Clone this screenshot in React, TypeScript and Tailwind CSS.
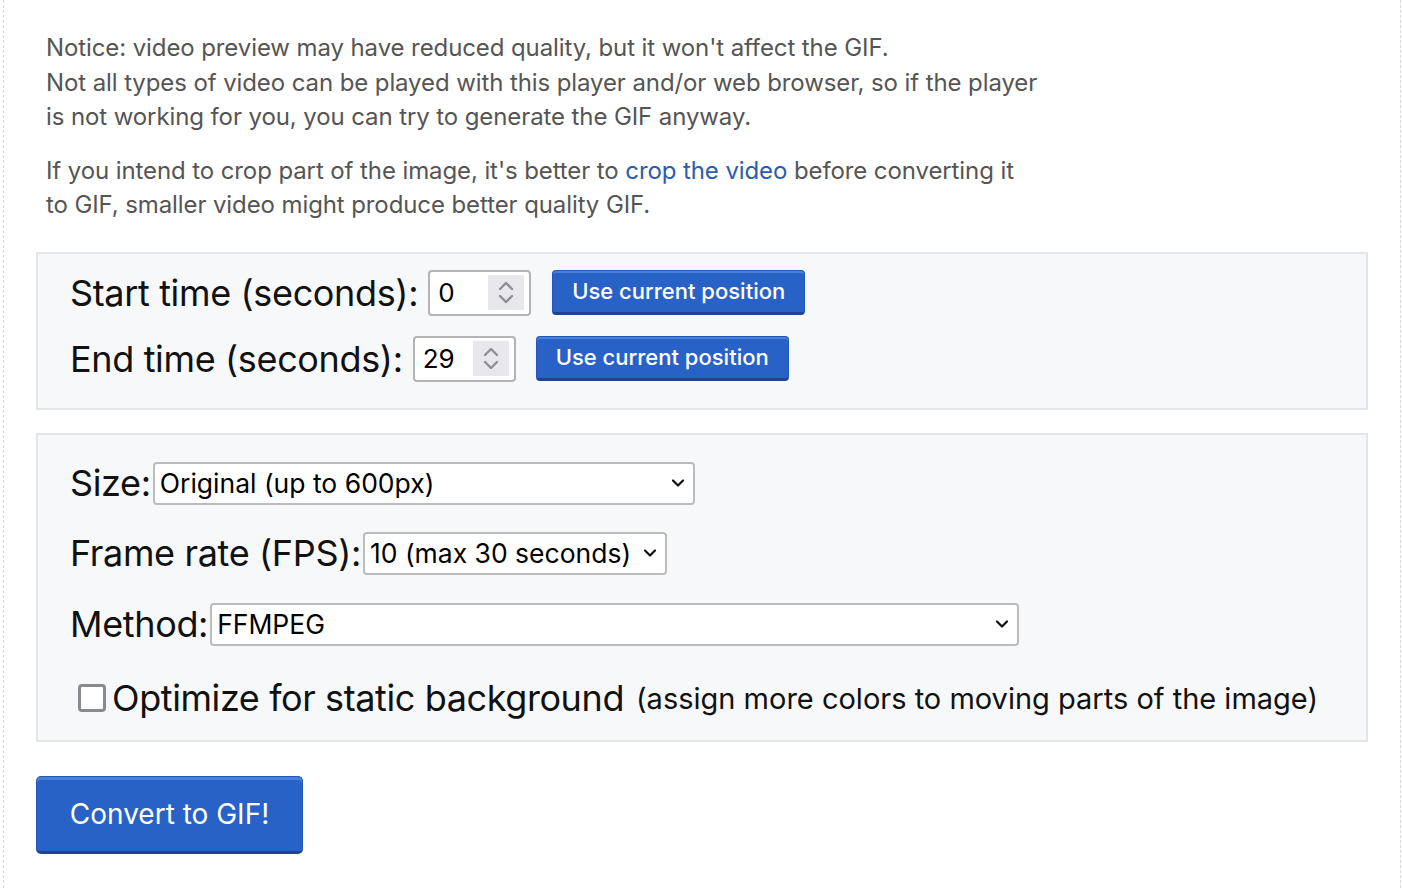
import React from "react";

const font = { fontFamily: 'Inter, "Liberation Sans", Arial, sans-serif' };

function Chevron() {
  return (
    <svg width="14" height="9" viewBox="0 0 14 9" className="pointer-events-none absolute right-[10px] top-1/2 -translate-y-1/2">
      <path d="M2 2 L7 7 L12 2" fill="none" stroke="#111" strokeWidth="2.2" strokeLinecap="round" strokeLinejoin="round" />
    </svg>
  );
}

function Spinner() {
  return (
    <div className="flex h-[35px] w-[36px] flex-col items-center justify-center gap-[3px] bg-[#e8e8ec]">
      <svg width="16" height="10" viewBox="0 0 16 10">
        <path d="M2 8 L8 2 L14 8" fill="none" stroke="#8e8e93" strokeWidth="2.4" strokeLinecap="round" strokeLinejoin="round" />
      </svg>
      <svg width="16" height="10" viewBox="0 0 16 10">
        <path d="M2 2 L8 8 L14 2" fill="none" stroke="#8e8e93" strokeWidth="2.4" strokeLinecap="round" strokeLinejoin="round" />
      </svg>
    </div>
  );
}

function NumInput({ value }: { value: string }) {
  return (
    <div className="flex h-[46px] w-[103px] items-center rounded-[4px] border-2 border-[#b4b4b4] bg-white pl-[8px] pr-[5px]">
      <input
        defaultValue={value}
        className="w-[50px] bg-transparent text-[26px] text-black outline-none"
        style={font}
      />
      <Spinner />
    </div>
  );
}

function BlueButton({ children }: { children: React.ReactNode }) {
  return (
    <button
      className="h-[45px] w-[253px] rounded-[4px] border border-[#2458b8] border-b-[3px] border-b-[#1d4592] bg-[#2962c7] text-[22px] font-medium text-white shadow-[inset_0_2px_0_#4a80d8]"
      style={font}
    >
      {children}
    </button>
  );
}

function Select({ width, value }: { width: string; value: string }) {
  return (
    <div className={`relative ${width}`}>
      <select
        defaultValue={value}
        className="h-[43px] w-full appearance-none rounded-[4px] border-2 border-[#bcbcbc] bg-white pl-[5px] text-[26.5px] text-black outline-none"
        style={font}
      >
        <option>{value}</option>
      </select>
      <Chevron />
    </div>
  );
}

export default function App() {
  return (
    <div className="min-h-[888px] bg-white" style={font}>
      <div className="ml-[3px] min-h-[888px] w-[1398px] border-x border-dashed border-x-[#d9d9d9] px-[32px] pt-[31px]">
        <div className="px-[10px] text-[24px] leading-[34.5px] tracking-[-0.1px] text-[#555]">
          <p>
            Notice: video preview may have reduced quality, but it won't affect the GIF.
            <br />
            Not all types of video can be played with this player and/or web browser, so if the player
            <br />
            is not working for you, you can try to generate the GIF anyway.
          </p>
          <p className="mt-[19px]">
            If you intend to crop part of the image, it's better to{" "}
            <a className="text-[#2a5db0]" href="#">crop the video</a> before converting it
            <br />
            to GIF, smaller video might produce better quality GIF.
          </p>
        </div>

        <div className="mt-[29px] border-2 border-[#e3e5e8] bg-[#f7f8fa] pb-[26px] pl-[32px] pt-[16px] text-[#111]">
          <div className="flex items-center">
            <span className="text-[36px] leading-[46px] tracking-[-0.35px]">Start time (seconds):</span>
            <span className="ml-[10px]"><NumInput value="0" /></span>
            <span className="ml-[21px]"><BlueButton>Use current position</BlueButton></span>
          </div>
          <div className="mt-[20px] flex items-center">
            <span className="text-[36px] leading-[46px] tracking-[-0.35px]">End time (seconds):</span>
            <span className="ml-[10px]"><NumInput value="29" /></span>
            <span className="ml-[20px]"><BlueButton>Use current position</BlueButton></span>
          </div>
        </div>

        <div className="mt-[23px] border-2 border-[#e3e5e8] bg-[#f7f8fa] pb-[20px] pl-[32px] pt-[27px] text-[#111]">
          <div className="flex items-center">
            <span className="mr-[2px] text-[36px] leading-[43px] tracking-[-0.35px]">Size:</span>
            <Select width="w-[542px]" value="Original (up to 600px)" />
          </div>
          <div className="mt-[27px] flex items-center">
            <span className="mr-[2px] text-[36px] leading-[43px] tracking-[-0.35px]">Frame rate (FPS):</span>
            <Select width="w-[304px]" value="10 (max 30 seconds)" />
          </div>
          <div className="mt-[28px] flex items-center">
            <span className="mr-[2px] text-[36px] leading-[43px] tracking-[-0.35px]">Method:</span>
            <Select width="w-[809px]" value="FFMPEG" />
          </div>
          <label className="mt-[31px] flex items-center">
            <span className="ml-[8px] mr-[6px] h-[28px] w-[28px] rounded-[4px] border-[3px] border-[#8a8a93] bg-white" />
            <span className="text-[36px] leading-[43px] tracking-[-0.4px]">Optimize for static background</span>
            <span className="ml-[12px] text-[29px] leading-[43px]">(assign more colors to moving parts of the image)</span>
          </label>
        </div>

        <button
          className="mt-[34px] h-[78px] w-[267px] rounded-[5px] border border-[#2458b8] border-b-[3px] border-b-[#1d4592] bg-[#2962c7] text-[28px] text-white shadow-[inset_0_3px_0_#4a80d8]"
          style={font}
        >
          Convert to GIF!
        </button>
      </div>
    </div>
  );
}
